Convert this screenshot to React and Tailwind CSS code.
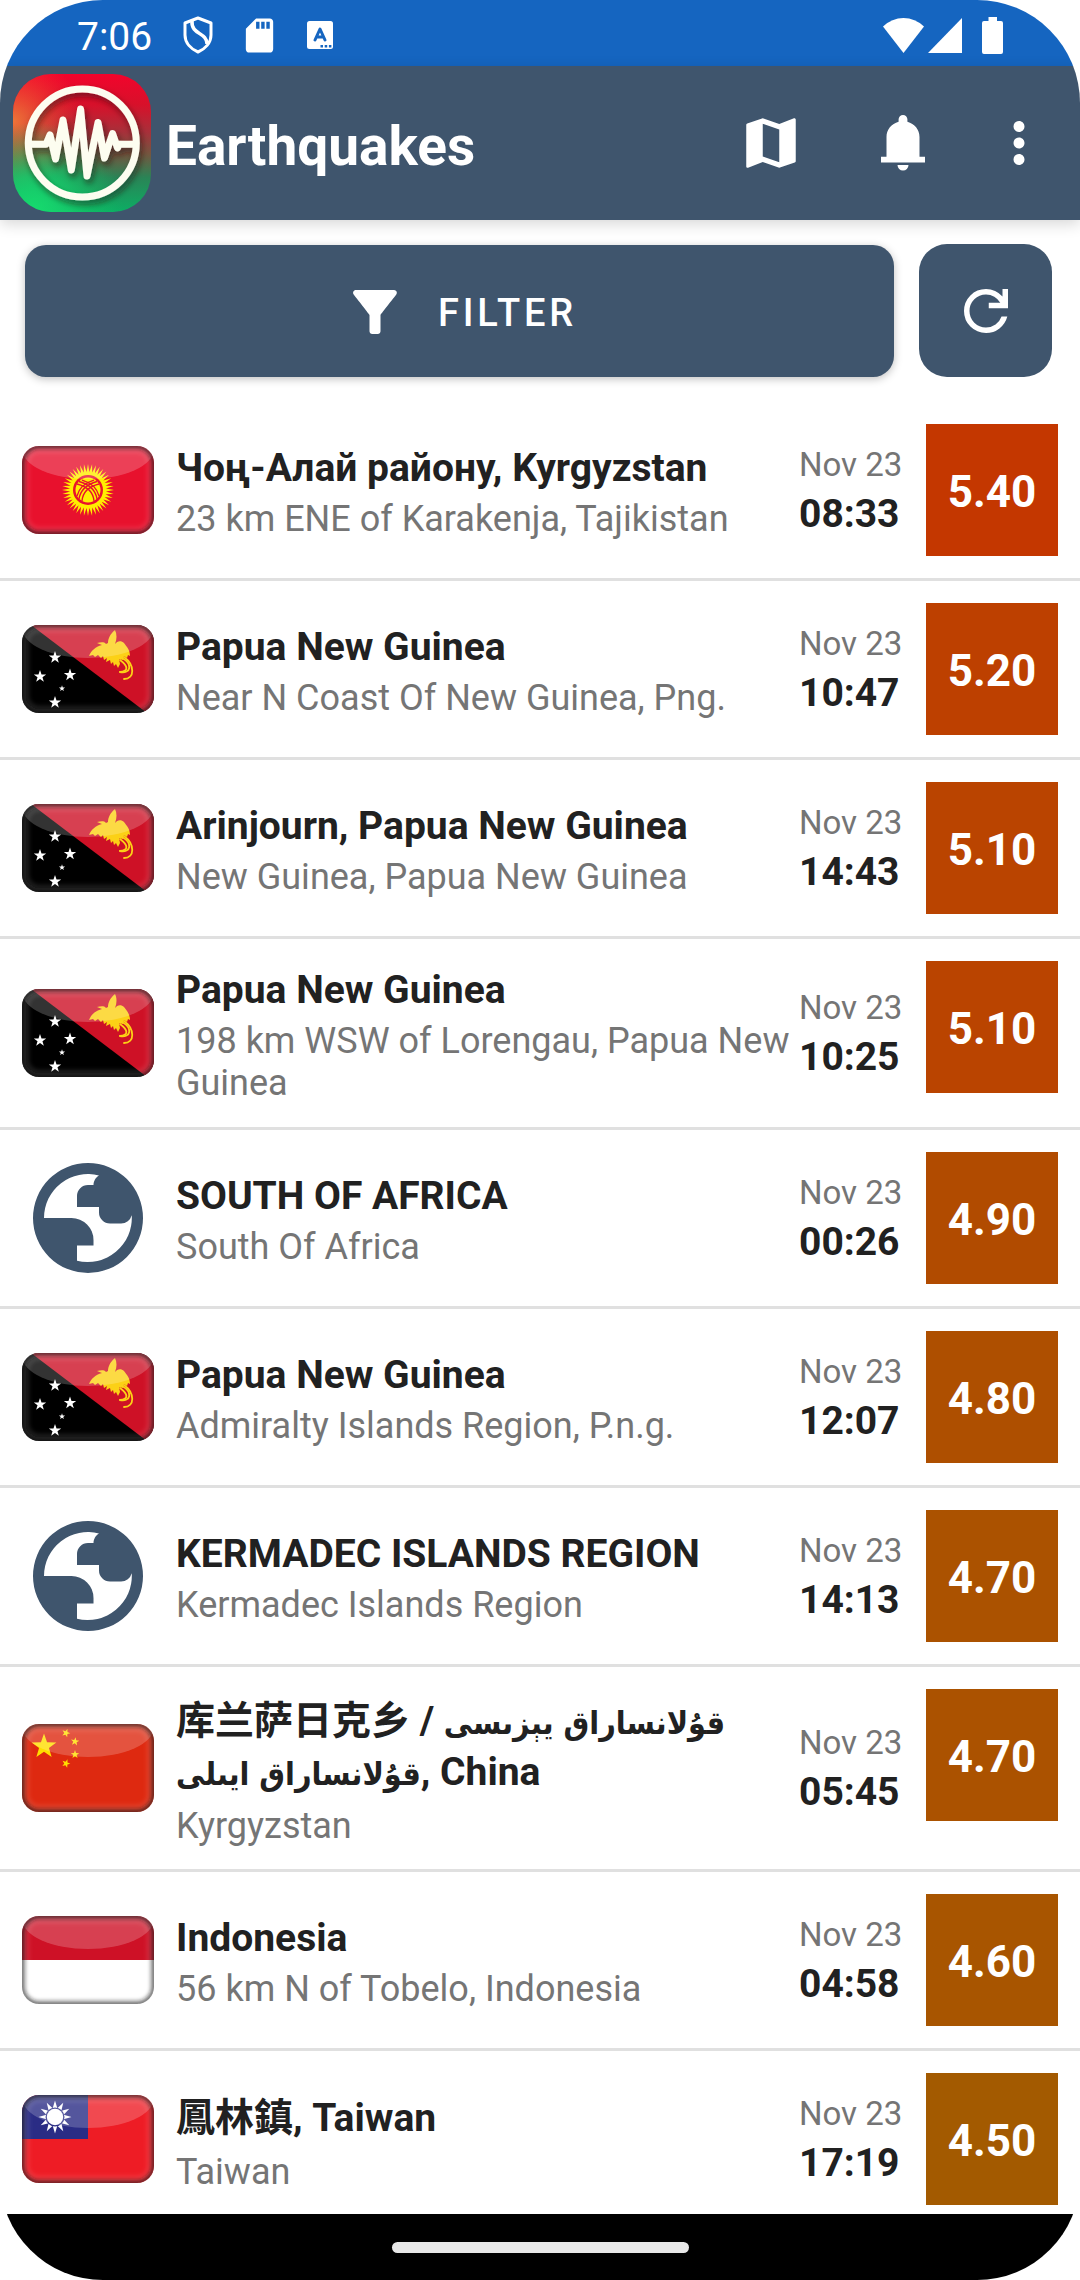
import React from "react";
import { MdMap, MdMoreVert, MdFilterAlt, MdSdCard } from "react-icons/md";

const quakes = [
  { flag: "kg", title: "Чоң-Алай району, Kyrgyzstan", place: "23 km ENE of Karakenja, Tajikistan", time: "08:33", mag: "5.40", color: "bg-[#c43700]" },
  { flag: "pg", title: "Papua New Guinea", place: "Near N Coast Of New Guinea, Png.", time: "10:47", mag: "5.20", color: "bg-[#bd4000]" },
  { flag: "pg", title: "Arinjourn, Papua New Guinea", place: "New Guinea, Papua New Guinea", time: "14:43", mag: "5.10", color: "bg-[#ba4400]" },
  { flag: "pg", title: "Papua New Guinea", place: "198 km WSW of Lorengau, Papua New Guinea", time: "10:25", mag: "5.10", color: "bg-[#ba4400]" },
  { flag: "globe", title: "SOUTH OF AFRICA", place: "South Of Africa", time: "00:26", mag: "4.90", color: "bg-[#b14b00]" },
  { flag: "pg", title: "Papua New Guinea", place: "Admiralty Islands Region, P.n.g.", time: "12:07", mag: "4.80", color: "bg-[#ae4f00]" },
  { flag: "globe", title: "KERMADEC ISLANDS REGION", place: "Kermadec Islands Region", time: "14:13", mag: "4.70", color: "bg-[#ab5200]" },
  {
    flag: "cn",
    title: (
      <>
        库兰萨日克乡 / <Uyghur>قۇلانساراق يېزىسى</Uyghur> <Uyghur>قۇلانساراق ايىلى</Uyghur>, China
      </>
    ),
    tall: true,
    place: "Kyrgyzstan",
    time: "05:45",
    mag: "4.70",
    color: "bg-[#ab5200]",
  },
  { flag: "id", title: "Indonesia", place: "56 km N of Tobelo, Indonesia", time: "04:58", mag: "4.60", color: "bg-[#a85500]" },
  { flag: "tw", title: "鳳林鎮, Taiwan", tall: true, place: "Taiwan", time: "17:19", mag: "4.50", color: "bg-[#a35a00]" },
];

function Uyghur({ children }) {
  return <span className="inline-block font-['DejaVu_Sans_Condensed','DejaVu_Sans',sans-serif] text-[32px] leading-none">{children}</span>;
}

function starPoints(cx, cy, r, rotate = 0) {
  return Array.from({ length: 10 }, (_, i) => {
    const a = ((i * 36 - 90 + rotate) * Math.PI) / 180;
    const d = i % 2 ? r * 0.4 : r;
    return `${(cx + d * Math.cos(a)).toFixed(2)},${(cy + d * Math.sin(a)).toFixed(2)}`;
  }).join(" ");
}

function rayPoints(cx, cy, inner, outer, count) {
  return Array.from({ length: count * 2 }, (_, i) => {
    const a = ((i * 180) / count - 90) * (Math.PI / 180);
    const d = i % 2 ? inner : outer;
    return `${(cx + d * Math.cos(a)).toFixed(2)},${(cy + d * Math.sin(a)).toFixed(2)}`;
  }).join(" ");
}

function Kyrgyzstan() {
  return (
    <>
      <rect width="132" height="88" fill="#e8112d" />
      <polygon points={rayPoints(66, 44, 18, 26, 40)} fill="#ffef00" />
      <circle cx="66" cy="44" r="15" fill="#e8112d" />
      <circle cx="66" cy="44" r="12.5" fill="#ffef00" />
      <g fill="none" stroke="#e8112d" strokeWidth="1.3">
        <path d="M55 50Q58 38 72 34M57 53Q59 40 75 35.500M60 55Q61 42 77 38" />
        <path d="M77 50Q74 38 60 34M75 53Q73 40 57 35.500M72 55Q71 42 55 38" />
      </g>
    </>
  );
}

function PapuaNewGuinea() {
  return (
    <>
      <rect width="132" height="88" fill="#000" />
      <path d="M9 0H132V88H125z" fill="#ce1126" />
      <g fill="#fff">
        <polygon points={starPoints(33, 32.5, 6.5)} />
        <polygon points={starPoints(18, 51.5, 6.5)} />
        <polygon points={starPoints(48, 50, 6.5)} />
        <polygon points={starPoints(40, 63.5, 3.2)} />
        <polygon points={starPoints(33, 77.5, 6.5)} />
      </g>
      <path
        d="M93 5C88 9 86 14 86 18L84 19C81 16 78 18 75 18L80 20C73 22 69 26 67 31L71 30L73 32L76 30L79 33L81 31L82 35L85 33L84 37L88 35L89 39L91 37L92 41L94 39L96 43L98 39L97 34L101 35L102 31L105 33L106 30L108 31C108 25 105 22 102 18C99 15 95 16 93 19C95 14 95 9 93 5Z"
        fill="#fcd116"
      />
      <g fill="none" stroke="#fcd116" strokeWidth="1.8" strokeLinecap="round">
        <path d="M98 35C106 41 107 46 98 47" />
        <path d="M100 33C111 39 109 49 98 47" />
        <path d="M102 32C113 40 113 54 102 54" />
      </g>
    </>
  );
}

function China() {
  return (
    <>
      <rect width="132" height="88" fill="#de2910" />
      <g fill="#ffde00">
        <polygon points={starPoints(22, 22.5, 13)} />
        <polygon points={starPoints(44, 9, 4.4, 20)} />
        <polygon points={starPoints(53, 17.5, 4.4, 8)} />
        <polygon points={starPoints(53, 30.5, 4.4, 0)} />
        <polygon points={starPoints(44, 39.5, 4.4, 20)} />
      </g>
    </>
  );
}

function Indonesia() {
  return (
    <>
      <rect width="132" height="88" fill="#fff" />
      <rect width="132" height="44" fill="#ce1126" />
    </>
  );
}

function Taiwan() {
  return (
    <>
      <rect width="132" height="88" fill="#ee1c25" />
      <rect width="66" height="44" fill="#2a2c85" />
      <polygon points={rayPoints(33, 22, 9, 16.5, 12)} fill="#fff" />
      <circle cx="33" cy="22" r="9.5" fill="#2a2c85" />
      <circle cx="33" cy="22" r="8.2" fill="#fff" />
    </>
  );
}

const flags = {
  kg: { Art: Kyrgyzstan, name: "Kyrgyzstan" },
  pg: { Art: PapuaNewGuinea, name: "Papua New Guinea" },
  cn: { Art: China, name: "China" },
  id: { Art: Indonesia, name: "Indonesia" },
  tw: { Art: Taiwan, name: "Taiwan" },
};

function Flag({ code, id }) {
  const { Art, name } = flags[code];
  return (
    <svg viewBox="0 0 132 88" className="h-[88px] w-[132px] shrink-0" role="img" aria-label={name}>
      <defs>
        <clipPath id={`clip-${id}`}>
          <rect width="132" height="88" rx="17" />
        </clipPath>
        <filter id={`soft-${id}`} x="-20%" y="-20%" width="140%" height="140%">
          <feGaussianBlur stdDeviation="2" />
        </filter>
      </defs>
      <g clipPath={`url(#clip-${id})`}>
        <Art />
        <rect x="3" y="3" width="126" height="82" rx="14" fill="none" stroke="#fff" strokeOpacity="0.12" strokeWidth="8" filter={`url(#soft-${id})`} />
        <ellipse cx="66" cy="3" rx="66" ry="30" fill="#fff" fillOpacity="0.2" />
        <rect width="132" height="88" rx="17" fill="none" stroke="#202020" strokeOpacity="0.7" strokeWidth="5" filter={`url(#soft-${id})`} />
      </g>
    </svg>
  );
}

function Globe() {
  return (
    <svg viewBox="0 0 24 24" className="size-[132px] shrink-0" role="img" aria-label="World" fill="#3f556d" fillRule="evenodd">
      <path d="M12 2a10 10 0 1 0 0 20a10 10 0 0 0 0-20zM4 12A8 8 0 0 1 14 4.250C13.400 4.600 13 5.300 13 6H12A2 2 0 0 0 10 8V10H14V11A2 2 0 0 0 16 13H18A2 2 0 0 0 19.950 11.500A8 8 0 0 1 10 19.750V17H13V16A4 4 0 0 0 9 12z" />
    </svg>
  );
}

function AppLogo() {
  return (
    <svg viewBox="0 0 138 138" className="size-[138px] shrink-0" role="img" aria-label="Earthquakes logo">
      <defs>
        <linearGradient id="logo-base" x1="0" y1="0" x2="0" y2="1">
          <stop offset="0" stopColor="#f2042c" />
          <stop offset="0.22" stopColor="#d8102a" />
          <stop offset="0.42" stopColor="#a8303a" />
          <stop offset="0.58" stopColor="#74563f" />
          <stop offset="0.75" stopColor="#2a8456" />
          <stop offset="1" stopColor="#0cae64" />
        </linearGradient>
        <radialGradient id="logo-orange" cx="0" cy="0.34" r="0.5">
          <stop offset="0" stopColor="#f07838" stopOpacity="0.95" />
          <stop offset="1" stopColor="#ff4030" stopOpacity="0" />
        </radialGradient>
        <radialGradient id="logo-green" cx="0.15" cy="1" r="0.65">
          <stop offset="0" stopColor="#16dc6e" />
          <stop offset="0.4" stopColor="#16d06c" stopOpacity="0.8" />
          <stop offset="1" stopColor="#10c060" stopOpacity="0" />
        </radialGradient>
        <filter id="logo-shadow" x="-20%" y="-20%" width="140%" height="140%">
          <feDropShadow dx="2" dy="4" stdDeviation="3" floodColor="#20100c" floodOpacity="0.55" />
        </filter>
      </defs>
      <rect width="138" height="138" rx="38" fill="url(#logo-base)" />
      <rect width="138" height="138" rx="38" fill="url(#logo-orange)" />
      <rect width="138" height="138" rx="38" fill="url(#logo-green)" />
      <g fill="none" stroke="#fdfdf0" strokeWidth="7" strokeLinecap="round" strokeLinejoin="round" filter="url(#logo-shadow)">
        <circle cx="69.3" cy="69" r="54" />
        <path d="M16 70.300H33L37 61L42.500 85L50 46L58.300 96L67.600 35L74 102L85 48.500L91.500 84L99.600 59.500L104.500 74L106 70.300H122" />
      </g>
    </svg>
  );
}

function StatusBar() {
  return (
    <div className="flex h-[66px] items-center bg-[#1565c0] pt-1 pr-[77px] pl-[77px] text-white">
      <span className="pt-1 text-[39px] leading-[45px]">7:06</span>
      <svg viewBox="0 0 30 38" className="ml-[31px] h-[38px] w-[30px]" fill="none" stroke="#fff" strokeWidth="3" strokeLinejoin="round" aria-hidden="true">
        <path d="M15 2L28 7V19C28 27 22 33 15 36C8 33 2 27 2 19V7z" />
        <path d="M9 5C8 19 24 16 24 28" strokeWidth="3.5" />
      </svg>
      <MdSdCard className="ml-[26px] size-[41px]" aria-hidden="true" />
      <svg viewBox="0 0 26 28" className="ml-[27px] h-7 w-[26px]" aria-hidden="true">
        <rect width="26" height="28" rx="2.5" fill="#fff" />
        <path d="M8 19L13 8L18 19M9.500 16H16.500" fill="none" stroke="#1565c0" strokeWidth="3" strokeLinecap="round" strokeLinejoin="round" />
        <path d="M13.500 24h2.500v2.500h-2.500zM17.700 24h2.500v2.500h-2.500zM21.900 24h2.500v2.500h-2.500z" fill="#1565c0" />
      </svg>
      <div className="ml-auto flex items-center" aria-hidden="true">
        <svg viewBox="0 0 41 36" className="h-9 w-[41px]" fill="#fff">
          <path d="M0 9.500Q9 1 20.500 1T41 9.500L20.500 36z" />
        </svg>
        <svg viewBox="0 0 34 36" className="ml-1 h-9 w-[34px]" fill="#fff">
          <path d="M34 1V36H0z" />
        </svg>
        <svg viewBox="0 0 21 37" className="ml-5 h-[37px] w-[21px]" fill="#fff">
          <path d="M6.500 0h8.500v4h4a2 2 0 0 1 2 2v29a2 2 0 0 1-2 2H2a2 2 0 0 1-2-2V6a2 2 0 0 1 2-2h4.500z" />
        </svg>
      </div>
    </div>
  );
}

function AppBar() {
  return (
    <header className="flex h-[154px] items-center bg-[#3f556d] pr-7 pl-[13px] text-white shadow-[0_4px_14px_rgba(0,0,0,0.16)]">
      <AppLogo />
      <h1 className="ml-[15px] pt-[6px] text-[55px] leading-[64px] font-bold">Earthquakes</h1>
      <nav className="ml-auto flex items-center">
        <button type="button" aria-label="Map" className="mr-[66px]">
          <MdMap className="size-[66px]" />
        </button>
        <button type="button" aria-label="Notifications" className="mr-[50px]">
          <svg viewBox="0 0 24 24" className="size-[66px]" fill="currentColor">
            <path d="M10.400 4.300V3.400a1.600 1.600 0 0 1 3.200 0V4.300C16.200 5 18 7.200 18 9.800V17H20V19.100H4V17H6V9.800C6 7.200 7.800 5 10.400 4.300zM10 20h4a2 2 0 0 1-4 0z" />
          </svg>
        </button>
        <button type="button" aria-label="More options">
          <MdMoreVert className="size-[66px]" />
        </button>
      </nav>
    </header>
  );
}

function Toolbar() {
  return (
    <div className="flex items-end gap-[25px] pt-6 pr-7 pb-[25px] pl-[25px]">
      <button
        type="button"
        className="flex h-[132px] flex-1 items-center justify-center gap-[30px] rounded-[21px] bg-[#3f556d] pt-[2px] text-[38px] font-medium tracking-widest text-white shadow-[0_2px_8px_rgba(0,0,0,0.25)]"
      >
        <MdFilterAlt className="size-[66px]" aria-hidden="true" />
        <span className="pt-[2px]">FILTER</span>
      </button>
      <button type="button" aria-label="Refresh" className="flex size-[133px] items-center justify-center rounded-[28px] bg-[#3f556d] text-white">
        <svg viewBox="0 0 24 24" className="size-[66px]" fill="currentColor">
          <path d="M12 20q-3.350 0-5.675-2.325T4 12q0-3.350 2.325-5.675T12 4q1.725 0 3.300.713T18 6.750V4h2v7h-7V9h4.200q-.8-1.400-2.188-2.200T12 6Q9.500 6 7.750 7.750T6 12q0 2.500 1.750 4.250T12 18q1.925 0 3.475-1.100T17.650 14h2.100q-.7 2.650-2.850 4.325T12 20Z" />
        </svg>
      </button>
    </div>
  );
}

function QuakeRow({ quake, index }) {
  return (
    <li className="flex items-stretch border-b-[3px] border-[#e0e0e0] p-[22px]">
      <div className="flex w-[132px] shrink-0 items-center">
        {quake.flag === "globe" ? <Globe /> : <Flag code={quake.flag} id={index} />}
      </div>
      <div className={`ml-[22px] flex min-w-0 flex-1 flex-col justify-center gap-[7px] pt-[7px] ${quake.tall ? "pb-0" : "pb-px"}`}>
        <h2 className={`text-[39px] font-bold text-[#212121] ${quake.tall ? "leading-[51px]" : "leading-[45px]"}`}>{quake.title}</h2>
        <p className="text-[36px] leading-[42px] text-[#757575]">{quake.place}</p>
      </div>
      <div className="flex w-[127px] shrink-0 flex-col justify-center gap-2 pt-[2px]">
        <span className="text-[33px] leading-[39px] text-[#757575]">Nov 23</span>
        <time className="text-[39px] leading-[45px] font-bold text-[#212121]">{quake.time}</time>
      </div>
      <div className={`flex size-[132px] shrink-0 items-center justify-center pt-1 text-[44px] font-bold text-white ${quake.color}`}>{quake.mag}</div>
    </li>
  );
}

export default function App() {
  return (
    <div className="flex h-screen flex-col overflow-hidden rounded-[103px] bg-white font-['Roboto','Noto_Sans_CJK_SC','DejaVu_Sans',sans-serif]">
      <StatusBar />
      <AppBar />
      <main className="flex min-h-0 flex-1 flex-col overflow-hidden">
        <Toolbar />
        <ul>
          {quakes.map((quake, i) => (
            <QuakeRow key={i} quake={quake} index={i} />
          ))}
        </ul>
      </main>
      <footer className="flex h-[66px] shrink-0 items-center justify-center bg-black">
        <div className="h-[11px] w-[297px] rounded-full bg-[#e8e8e8]" />
      </footer>
    </div>
  );
}
